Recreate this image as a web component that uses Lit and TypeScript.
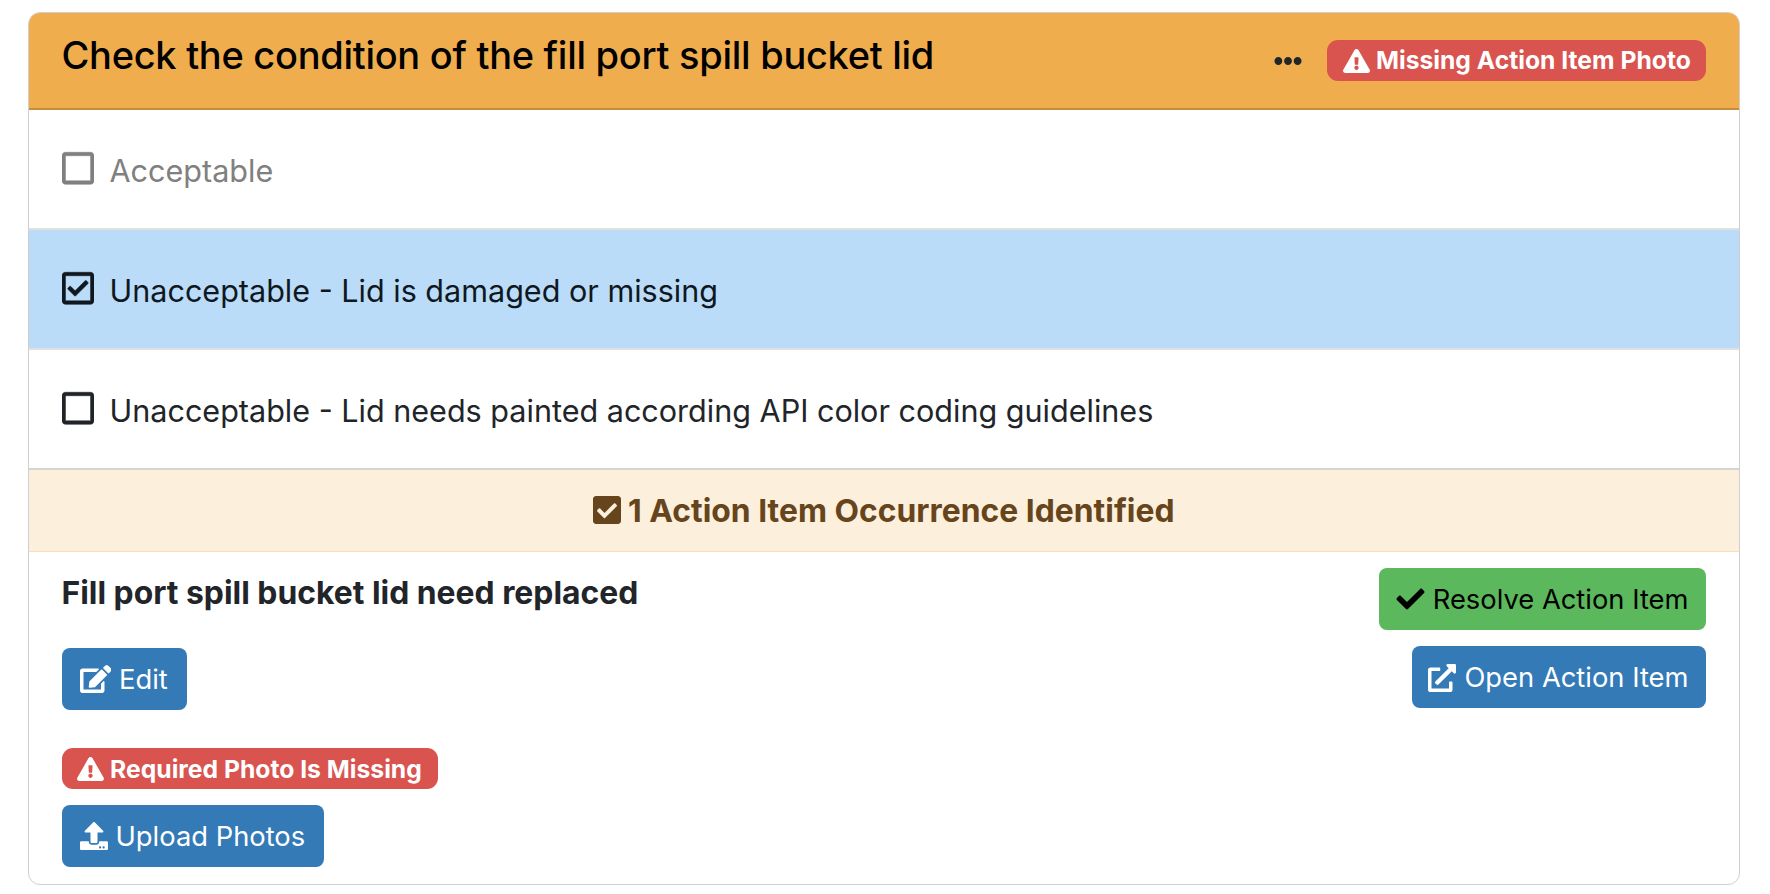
import { LitElement, html, css } from "lit";
import { customElement } from "lit/decorators.js";

const icon = (cls: string, vb: string, d: string) =>
  html`<svg class=${cls} viewBox=${vb} aria-hidden="true"><path fill="currentColor" d=${d}></path></svg>`;

const TRI = "M569.517 440.013C587.975 472.007 564.806 512 527.94 512H48.054c-36.937 0-59.999-40.055-41.577-71.987L246.423 23.985c18.467-32.009 64.72-31.951 83.154 0l239.94 416.028zM288 354c-25.405 0-46 20.595-46 46s20.595 46 46 46 46-20.595 46-46-20.595-46-46-46zm-43.673-165.346l7.418 136c.347 6.364 5.609 11.346 11.982 11.346h48.546c6.373 0 11.635-4.982 11.982-11.346l7.418-136c.375-6.874-5.098-12.654-11.982-12.654h-63.383c-6.884 0-12.356 5.78-11.981 12.654z";
const CHECK = "M173.898 439.404l-166.4-166.4c-9.997-9.997-9.997-26.206 0-36.204l36.203-36.204c9.997-9.998 26.207-9.998 36.204 0L192 312.69 432.095 72.596c9.997-9.997 26.207-9.997 36.204 0l36.203 36.204c9.997 9.997 9.997 26.206 0 36.204l-294.4 294.401c-9.998 9.997-26.207 9.997-36.204-.001z";
const EDIT = "M402.6 83.2l90.2 90.2c3.8 3.8 3.8 10 0 13.8L274.4 405.6l-92.8 10.3c-12.4 1.4-22.9-9.1-21.5-21.5l10.3-92.8L388.8 83.2c3.8-3.8 10-3.8 13.8 0zm162-22.9l-48.8-48.8c-15.2-15.2-39.9-15.2-55.2 0l-35.4 35.4c-3.8 3.8-3.8 10 0 13.8l90.2 90.2c3.8 3.8 10 3.8 13.8 0l35.4-35.4c15.2-15.3 15.2-40 0-55.2zM384 346.2V448H64V128h229.8c3.2 0 6.2-1.3 8.5-3.5l40-40c7.6-7.6 2.2-20.5-8.5-20.5H48C21.5 64 0 85.5 0 112v352c0 26.5 21.5 48 48 48h352c26.5 0 48-21.5 48-48V306.2c0-10.7-12.9-16-20.5-8.5l-40 40c-2.2 2.3-3.5 5.3-3.5 8.5z";
const EXT = "M432,320H400a16,16,0,0,0-16,16V448H64V128H208a16,16,0,0,0,16-16V80a16,16,0,0,0-16-16H48A48,48,0,0,0,0,112V464a48,48,0,0,0,48,48H400a48,48,0,0,0,48-48V336A16,16,0,0,0,432,320ZM488,0h-128c-21.37,0-32.05,25.91-17,41l35.73,35.73L135,320.37a24,24,0,0,0,0,34L157.67,377a24,24,0,0,0,34,0L435.28,133.32,471,169c15,15,41,4.5,41-17V24A24,24,0,0,0,488,0Z";
const UPLOAD = "M296 384h-80c-13.3 0-24-10.7-24-24V192h-87.7c-17.8 0-26.7-21.5-14.1-34.1L242.3 5.7c7.5-7.5 19.8-7.5 27.3 0l152.2 152.2c12.6 12.6 3.7 34.1-14.1 34.1H320v168c0 13.3-10.7 24-24 24zm216-8v112c0 13.3-10.7 24-24 24H24c-13.3 0-24-10.7-24-24V376c0-13.3 10.7-24 24-24h136v8c0 30.9 25.1 56 56 56h80c30.9 0 56-25.1 56-56v-8h136c13.3 0 24 10.7 24 24zm-124 88c0-11-9-20-20-20s-20 9-20 20 9 20 20 20 20-9 20-20zm64 0c0-11-9-20-20-20s-20 9-20 20 9 20 20 20 20-9 20-20z";
const CHECK_SOLID = "M400 480H48c-26.51 0-48-21.49-48-48V80c0-26.51 21.49-48 48-48h352c26.51 0 48 21.49 48 48v352c0 26.51-21.49 48-48 48zm-204.686-98.059l184-184c6.248-6.248 6.248-16.379 0-22.627l-22.627-22.627c-6.248-6.248-16.379-6.249-22.628 0L184 302.745l-69.059-69.059c-6.248-6.248-16.379-6.248-22.628 0L69.686 256.313c-6.248 6.248-6.248 16.379 0 22.627l104 104c6.249 6.25 16.379 6.25 22.628.001z";
const CHECK_REG = "M400 32H48C21.49 32 0 53.49 0 80v352c0 26.51 21.49 48 48 48h352c26.51 0 48-21.49 48-48V80c0-26.51-21.49-48-48-48zm0 400H48V80h352v352zm-35.864-241.724L191.547 361.48c-4.705 4.667-12.303 4.637-16.97-.068l-90.781-91.516c-4.667-4.705-4.637-12.303.069-16.971l22.719-22.536c4.705-4.667 12.303-4.637 16.97.069l59.792 60.277 141.352-140.216c4.705-4.667 12.303-4.637 16.97.068l22.536 22.718c4.667 4.706 4.637 12.304-.068 16.971z";
const SQUARE = "M400 32H48C21.5 32 0 53.5 0 80v352c0 26.5 21.5 48 48 48h352c26.5 0 48-21.5 48-48V80c0-26.5-21.5-48-48-48zm-6 400H54c-3.3 0-6-2.7-6-6V86c0-3.3 2.7-6 6-6h340c3.3 0 6 2.7 6 6v340c0 3.3-2.7 6-6 6z";
const DOTS = "M328 256c0 39.8-32.2 72-72 72s-72-32.2-72-72 32.2-72 72-72 72 32.2 72 72zm104-72c-39.8 0-72 32.2-72 72s32.2 72 72 72 72-32.2 72-72-32.2-72-72-72zm-352 0c-39.8 0-72 32.2-72 72s32.2 72 72 72 72-32.2 72-72-32.2-72-72-72z";

@customElement("app-root")
export class AppRoot extends LitElement {
  static styles = css`
    :host {
      display: block;
      width: 1770px;
      height: 894px;
      background: #fff;
      font-family: Inter, "Liberation Sans", sans-serif;
      color: #212529;
      box-sizing: border-box;
      padding: 11.5px 30.5px 0 28px;
    }
    * { box-sizing: border-box; }
    svg { display: block; flex: none; }
    .card {
      height: 873px;
      border: 1.5px solid #cfcfcf;
      border-radius: 12px;
      overflow: hidden;
      display: flex;
      flex-direction: column;
    }
    .head {
      height: 97px;
      flex: none;
      background: #f0ad4e;
      border-bottom: 2px solid #c68d3d;
      display: flex;
      align-items: flex-start;
      padding: 0 33px 0 32.5px;
      color: #000;
    }
    .title {
      margin: 16px 0 0;
      font-size: 38px;
      font-weight: 500;
      letter-spacing: -0.28px;
      line-height: 52px;
      flex: 1;
    }
    .dots { width: 28px; height: 28px; color: #212529; margin: 34px 25px 0 0; }
    .badge {
      display: inline-flex;
      align-items: center;
      height: 41px;
      padding: 0 15.6px;
      gap: 6px;
      background: #d9534f;
      color: #fff;
      font-size: 24.7px;
      font-weight: 700;
      border-radius: 11px;
      line-height: 1;
    }
    .badge svg { width: 27px; height: 24px; }
    .head .badge { margin-top: 27.5px; padding-right: 14.6px; }
    .row {
      height: 120px;
      flex: none;
      display: flex;
      align-items: center;
      gap: 16px;
      padding: 3px 0 0 32.5px;
      font-size: 30.55px;
      border-bottom: 2px solid #e1e1e1;
      color: #212529;
    }
    .row svg { width: 32px; height: 36.57px; margin-top: -4px; }
    .row path { stroke: currentColor; stroke-width: 8px; }
    .row.muted { color: #808080; }
    .row.sel { background: #bbdcf8; color: #10181f; }
    .row.last { border-bottom-color: #d4d4d4; }
    .occ {
      height: 82px;
      flex: none;
      background: #fcefdc;
      border-bottom: 1.5px solid #fbdfbb;
      display: flex;
      align-items: center;
      justify-content: center;
      gap: 7px;
      color: #66451c;
      font-size: 31.85px;
      font-weight: 700;
    }
    .occ svg { width: 28px; height: 32px; }
    .body {
      flex: 1;
      display: flex;
      justify-content: space-between;
      padding: 16px 33px 0 32.5px;
    }
    .left { display: flex; flex-direction: column; align-items: flex-start; }
    .right { display: flex; flex-direction: column; align-items: flex-end; gap: 16.5px; }
    .name { margin: 0 0 27px; font-size: 31.85px; font-weight: 700; line-height: 50px; height: 53px; color: #212529; }
    .btn {
      display: inline-flex;
      align-items: center;
      height: 62px;
      padding: 1px 18px 0;
      gap: 8px;
      border-radius: 8px;
      font-size: 27.35px;
      color: #fff;
      background: #337ab7;
    }
    .btn svg { height: 28px; }
    .btn.green { background: #5cb85c; color: #000; }
    .i-edit { width: 31.5px; }
    .i-check { width: 29px; }
    .i-ext, .i-up { width: 28px; }
    .left .btn { padding-right: 19px; }
    .right .btn { padding-left: 16.5px; padding-right: 17px; }
    .left .badge { margin-top: 38px; padding: 2px 16.4px 0 15.6px; }
    .left .up { margin-top: 16px; }
  `;

  render() {
    return html`
      <div class="card">
        <div class="head">
          <h3 class="title">Check the condition of the fill port spill bucket lid</h3>
          ${icon("dots", "0 0 512 512", DOTS)}
          <span class="badge">${icon("", "0 0 576 512", TRI)}Missing Action Item Photo</span>
        </div>
        <div class="row muted">${icon("", "0 0 448 512", SQUARE)}Acceptable</div>
        <div class="row sel">${icon("", "0 0 448 512", CHECK_REG)}Unacceptable - Lid is damaged or missing</div>
        <div class="row last">${icon("", "0 0 448 512", SQUARE)}Unacceptable - Lid needs painted according API color coding guidelines</div>
        <div class="occ">${icon("", "0 0 448 512", CHECK_SOLID)}1 Action Item Occurrence Identified</div>
        <div class="body">
          <div class="left">
            <h5 class="name">Fill port spill bucket lid need replaced</h5>
            <a class="btn">${icon("i-edit", "0 0 576 512", EDIT)}Edit</a>
            <span class="badge">${icon("", "0 0 576 512", TRI)}Required Photo Is Missing</span>
            <a class="btn up">${icon("i-up", "0 0 512 512", UPLOAD)}Upload Photos</a>
          </div>
          <div class="right">
            <a class="btn green">${icon("i-check", "0 0 512 512", CHECK)}Resolve Action Item</a>
            <a class="btn">${icon("i-ext", "0 0 512 512", EXT)}Open Action Item</a>
          </div>
        </div>
      </div>
    `;
  }
}
